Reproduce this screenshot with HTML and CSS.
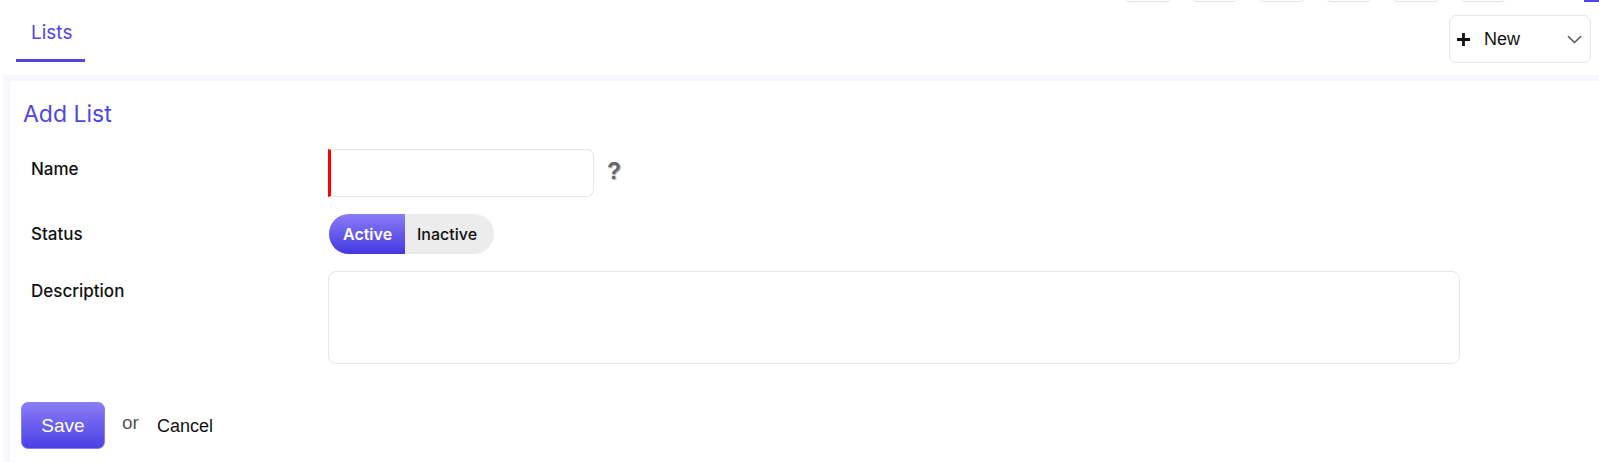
FILE: index.html
```html
<!DOCTYPE html>
<html lang="en">
<head>
    <meta charset="UTF-8">
    <title>Add List</title>
    <link rel="stylesheet" href="styles.css">
</head>
<body>

    <div class="topstrip">
        <span class="stub"></span>
        <span class="stub"></span>
        <span class="stub"></span>
        <span class="stub"></span>
        <span class="stub"></span>
        <span class="stub"></span>
        <span class="stub-blue"></span>
    </div>

    <div class="header">
        <div class="tab active">Lists</div>
        <button class="new-btn">
            <svg class="plus" width="15" height="15" viewBox="0 0 15 15">
                <path d="M7.5 1v13M1 7.5h13" stroke="#111" stroke-width="2.8" fill="none"/>
            </svg>
            <span class="new-label">New</span>
            <svg class="chev" width="15" height="9" viewBox="0 0 15 9">
                <path d="M1 1.2l6.5 6.3 6.5-6.3" stroke="#555" stroke-width="1.6" fill="none"/>
            </svg>
        </button>
    </div>

    <div class="main">
        <div class="panel">
            <h2 class="title">Add List</h2>

            <!-- 이름 -->
            <div class="field">
                <label class="field-label">Name</label>
                <div class="field-input">
                    <input type="text" class="text-input required">
                    <span class="help">?</span>
                </div>
            </div>

            <!-- 상태 -->
            <div class="field">
                <label class="field-label">Status</label>
                <div class="field-input">
                    <div class="toggle">
                        <span class="toggle-opt on">Active</span>
                        <span class="toggle-opt">Inactive</span>
                    </div>
                </div>
            </div>

            <!-- 설명 -->
            <div class="field">
                <label class="field-label">Description</label>
                <div class="field-input">
                    <textarea class="text-area"></textarea>
                </div>
            </div>

            <div class="actions">
                <button class="save-btn">Save</button>
                <span class="or">or</span>
                <a class="cancel">Cancel</a>
            </div>
        </div>
    </div>

</body>
</html>
```

FILE: styles.css
```css
body {
    margin: 0;
    background: #fff;
    font-family: Inter, "Noto Sans", sans-serif;
    color: #111;
}

.topstrip {
    display: flex;
    justify-content: flex-end;
    align-items: flex-end;
    height: 2px;
    overflow: hidden;
}

.stub {
    width: 48px;
    height: 12px;
    margin-right: 19px;
    border: 1px solid #e4e4e8;
    border-radius: 6px;
    box-sizing: border-box;
}

.stub-blue {
    width: 15px;
    height: 2px;
    margin-left: 58px;
    background: #4f46e5;
}

.header {
    display: flex;
    justify-content: space-between;
    align-items: flex-start;
    height: 73px;
}

.tab {
    margin-left: 16px;
    padding: 20px 15px 0;
    width: 69px;
    height: 60px;
    box-sizing: border-box;
    font-size: 19px;
    line-height: 22px;
    color: #4f46e5;
}

.tab.active {
    border-bottom: 3px solid #4f46e5;
}

.new-btn {
    display: flex;
    align-items: center;
    margin: 13px 8px 0 0;
    padding: 0 8px 0 6px;
    width: 142px;
    height: 48px;
    box-sizing: border-box;
    background: #fff;
    border: 1px solid #e6e6ea;
    border-radius: 7px;
    font-family: "Liberation Sans", Arial, sans-serif;
    font-size: 18px;
    color: #111;
}

.new-label {
    margin-left: 13px;
    flex: 1;
    text-align: left;
}

.main {
    margin-left: 3px;
    padding: 6px 0 0 7px;
    background: #f7f7fc;
}

.panel {
    background: #fff;
    padding: 19px 0 14px 11px;
    min-height: 367px;
    box-sizing: border-box;
}

.title {
    margin: 0 0 21px 2px;
    font-size: 23px;
    line-height: 28px;
    font-weight: 400;
    color: #4f46e5;
}

.field {
    display: flex;
    margin-bottom: 17px;
}

.field-label {
    width: 297px;
    padding: 8px 0 0 10px;
    font-size: 17px;
    line-height: 24px;
    font-weight: 500;
}

.field-input {
    display: flex;
    align-items: center;
}

.text-input {
    width: 266px;
    height: 48px;
    box-sizing: border-box;
    border: 1px solid #e6e6ea;
    border-left: 3px solid #ff0000;
    border-radius: 0 7px 7px 0;
    outline: none;
}

.help {
    margin: 0 0 4px 13px;
    font-family: "Liberation Sans", Arial, sans-serif;
    font-weight: 700;
    font-size: 23px;
    color: #666;
    text-shadow: 1px 1px 1px #b5b5b5;
}

.toggle {
    display: flex;
    height: 40px;
    margin-left: 1px;
    border-radius: 20px;
    overflow: hidden;
    background: #ececec;
}

.toggle-opt {
    display: flex;
    align-items: center;
    width: 89px;
    box-sizing: border-box;
    padding-left: 12px;
    font-size: 16px;
    font-weight: 500;
    color: #111;
}

.toggle-opt.on {
    width: 76px;
    padding-left: 14px;
    background: linear-gradient(#8b7cf8, #4338e0);
    color: #fff;
    font-weight: 600;
}

.text-area {
    width: 1132px;
    height: 93px;
    box-sizing: border-box;
    border: 1px solid #e6e6ea;
    border-radius: 8px;
    resize: none;
    outline: none;
}

.actions {
    display: flex;
    align-items: flex-start;
    margin-top: 38px;
    font-family: "Liberation Sans", Arial, sans-serif;
    font-size: 18px;
}

.save-btn {
    width: 84px;
    height: 47px;
    border: 1px solid #8a80f0;
    border-radius: 7px;
    background: linear-gradient(#8b7cf8, #4a40e4);
    color: #fff;
    font-family: inherit;
    font-size: 19px;
}

.or {
    margin: 10px 0 0 17px;
    font-size: 19px;
    color: #555;
}

.cancel {
    margin: 14px 0 0 18px;
    color: #111;
}
```
